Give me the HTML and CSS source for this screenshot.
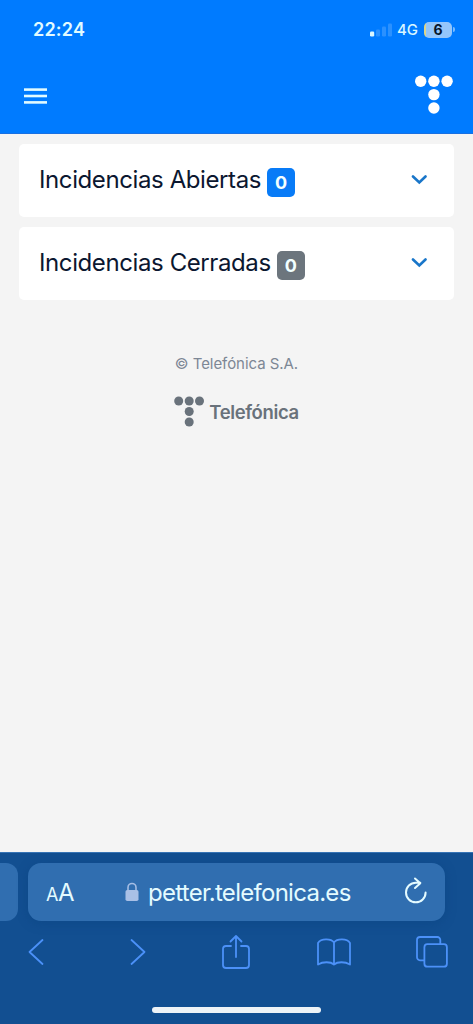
FILE: index.html
```html
<!DOCTYPE html>
<html lang="es">
<head>
<meta charset="utf-8">
<title>Incidencias</title>
<link rel="stylesheet" href="styles.css">
</head>
<body>
<header class="header">
  <div class="status">
    <span class="time">22:24</span>
    <div class="status-right">
      <svg class="signal" width="22" height="14" viewBox="0 0 22 14"><rect x="0" y="8.5" width="4.2" height="5" rx="1.2" fill="#d9f6ff"/><g fill="#2b91ff"><rect x="6" y="6.5" width="4" height="7" rx="1.2"/><rect x="12" y="3.5" width="4" height="10" rx="1.2"/><rect x="18" y="0.5" width="4" height="13" rx="1.2"/></g></svg>
      <span class="network">4G</span>
      <span class="battery">6</span>
      <span class="battery-tip"></span>
    </div>
  </div>
  <div class="navbar">
    <svg class="menu" width="24" height="18" viewBox="0 0 24 18" fill="#e2fbff"><rect x="0" y="1.3" width="23" height="2.6"/><rect x="0" y="7.7" width="23" height="2.6"/><rect x="0" y="14.1" width="23" height="2.6"/></svg>
    <svg class="logo" width="38" height="39" viewBox="0 0 38 39" fill="#fff"><circle cx="5.7" cy="6.300" r="5.7"/><circle cx="18.900" cy="6.300" r="5.7"/><circle cx="32.100" cy="6.300" r="5.7"/><circle cx="18.900" cy="19.600" r="5.7"/><circle cx="18.900" cy="33" r="5.7"/></svg>
  </div>
</header>
<main class="content">
  <section class="card">
    <h2 class="card-title">Incidencias Abiertas</h2><span class="badge primary">0</span>
    <svg class="chevron" width="16" height="10" viewBox="0 0 16 10"><path d="M2 1.500l6.300 6 6.200-6"/></svg>
  </section>
  <section class="card">
    <h2 class="card-title">Incidencias Cerradas</h2><span class="badge secondary">0</span>
    <svg class="chevron" width="16" height="10" viewBox="0 0 16 10"><path d="M2 1.500l6.300 6 6.200-6"/></svg>
  </section>
  <footer class="footer">
    <p class="copyright">© Telefónica S.A.</p>
    <div class="brand">
      <svg width="30" height="31" viewBox="0 0 30 31" fill="#69727b"><circle cx="4.7" cy="5" r="4.5"/><circle cx="15.2" cy="5" r="4.5"/><circle cx="25.5" cy="5" r="4.5"/><circle cx="15.2" cy="15.5" r="4.5"/><circle cx="15.2" cy="26" r="4.5"/></svg>
      <span class="brand-name">Telefónica</span>
    </div>
  </footer>
</main>
<nav class="browser">
  <div class="tabs">
    <div class="previous-tab"></div>
    <div class="address">
      <span class="text-size"><span class="small-a">A</span>A</span>
      <svg class="lock" width="14" height="20" viewBox="0 0 14 20"><path d="M3 9V5.5a4 4 0 0 1 8 0V9" fill="none" stroke="#a4bde4" stroke-width="1.6"/><rect x="0.5" y="8" width="13" height="11" rx="1.8" fill="#a9c0e6"/></svg>
      <span class="url">petter.telefonica.es</span>
      <svg class="reload" width="24" height="28" viewBox="0 0 24 28"><path d="M21.6 15.5a9.8 9.8 0 1 1-9.800-9.800h4.500M11 1.500l5.300 4.700-5.300 4.800"/></svg>
    </div>
  </div>
  <div class="toolbar">
    <svg class="back" width="16" height="28" viewBox="0 0 16 28"><path d="M14.500 2 1.500 14l13 12"/></svg>
    <svg width="16" height="28" viewBox="0 0 16 28"><path d="m1.500 2 13 12-13 12"/></svg>
    <svg width="28" height="36" viewBox="0 0 28 36"><path d="M9 12H4a3 3 0 0 0-3 3v16a3 3 0 0 0 3 3h20a3 3 0 0 0 3-3V15a3 3 0 0 0-3-3h-5M14 23V2M8.500 7.500 14 2l5.500 5.500"/></svg>
    <svg width="34" height="28" viewBox="0 0 34 28"><path d="M17 4.500V26.500C13.500 23.500 6 23.500 1 26.500V5C4 .3 14 .3 17 4.500c3-4.200 13-4.200 16 .5v21.500c-5-3-12.500-3-16 0"/></svg>
    <svg width="32" height="32" viewBox="0 0 32 32"><path d="M24.300 8V4a3 3 0 0 0-3-3H4a3 3 0 0 0-3 3v17.300a3 3 0 0 0 3 3h4"/><rect x="8.400" y="8.200" width="22.500" height="22.500" rx="3"/></svg>
  </div>
  <div class="home-indicator"></div>
</nav>
</body>
</html>
```
FILE: styles.css
```css
* { box-sizing: border-box; }
body {
  margin: 0;
  height: 1024px;
  display: flex;
  flex-direction: column;
  overflow: hidden;
  background: #f4f4f4;
  font-family: Inter, "Liberation Sans", sans-serif;
}
svg { display: block; flex: none; }
.header { height: 134px; background: #007bff; border-bottom: 1px solid #1870e2; flex: none; }
.status { height: 59px; display: flex; align-items: center; justify-content: space-between; padding: 0 21px 0 33px; }
.time { font-size: 18px; font-weight: 600; color: #e2fbff; letter-spacing: .2px; }
.status-right { display: flex; align-items: center; }
.network { margin-left: 5px; width: 27px; font-size: 15px; font-weight: 500; color: #d9f6ff; white-space: nowrap; letter-spacing: -.2px; }
.battery { width: 28px; height: 16px; border-radius: 5px; background: linear-gradient(90deg, #ddd68a 0 2px, #94c6fb 2px); color: #06152c; font-size: 14px; line-height: 16px; font-weight: 700; text-align: center; }
.battery-tip { width: 2px; height: 5px; margin-left: 1px; margin-right: -3px; border-radius: 0 3px 3px 0; background: #79bbff; }
.navbar { display: flex; align-items: center; justify-content: space-between; padding: 16px 20px 0 24px; }
.menu { margin-top: 3px; }
.content { flex: 1; padding: 10px 19px 0; display: flex; flex-direction: column; gap: 10px; }
.card { height: 73px; border-radius: 5px; background: #fff; display: flex; align-items: center; padding: 0 27px 0 20px; }
.card-title { margin: 0; padding-bottom: 2px; font-size: 24px; line-height: 30px; font-weight: 400; color: #0b1730; white-space: nowrap; letter-spacing: -.4px; }
.badge { width: 28px; height: 29px; margin: 4px 0 0 6px; border-radius: 5px; color: #f2ffff; font-size: 18px; font-weight: 700; line-height: 29px; text-align: center; }
.primary { background: #087bf7; }
.secondary { background: #6c757d; }
.chevron { margin-left: auto; margin-bottom: 2px; fill: none; stroke: #1976c9; stroke-width: 2.6; stroke-linecap: round; }
.footer { display: flex; flex-direction: column; align-items: center; padding-top: 43px; }
.copyright { margin: 0; font-size: 15px; line-height: 22px; color: #7d8795; letter-spacing: -.05px; white-space: nowrap; }
.brand { display: flex; align-items: center; gap: 5px; margin-top: 21px; }
.brand-name { font-size: 18.5px; font-weight: 600; line-height: 26px; padding-top: 1px; color: #69727b; letter-spacing: -.38px; }
.browser { height: 172px; flex: none; background: #124f91; border-top: 1px solid #3673b5; overflow: hidden; }
.tabs { display: flex; gap: 10px; padding-top: 10px; }
.previous-tab { width: 18px; height: 58px; background: #306eb0; border-radius: 0 12px 12px 0; }
.address { width: 417px; height: 58px; border-radius: 13px; background: #306eb0; box-shadow: 0 2px 12px #073c7855; display: flex; align-items: center; padding: 0 17px 0 18px; color: #e4fbff; }
.text-size { width: 79px; padding-top: 3px; font-size: 24px; line-height: 30px; letter-spacing: -.5px; }
.small-a { font-size: 18px; }
.url { margin-left: 9px; padding-top: 2px; font-size: 24px; line-height: 30px; white-space: nowrap; letter-spacing: -.72px; }
.reload { margin-left: auto; margin-top: -3px; fill: none; stroke: #e4fbff; stroke-width: 2; stroke-linecap: round; stroke-linejoin: round; }
.toolbar { height: 62px; display: grid; grid-template-columns: 89px repeat(4, 98px); align-items: center; justify-items: center; fill: none; stroke: #4c91f8; stroke-width: 1.8; stroke-linecap: round; stroke-linejoin: round; }
.back { justify-self: start; margin-left: 28px; }
.home-indicator { width: 169px; height: 6px; border-radius: 3px; background: #eef3f7; margin: 24px auto 0; }
```
